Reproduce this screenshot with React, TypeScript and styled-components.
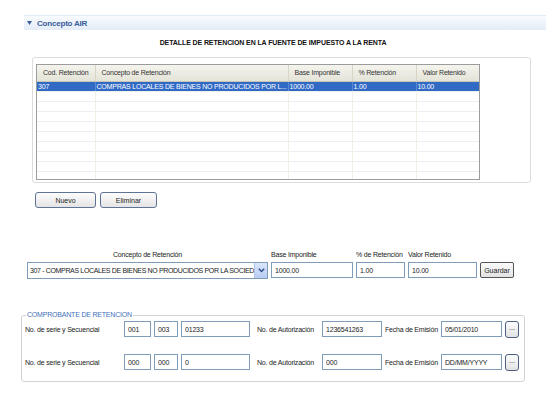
import React from 'react';
import styled, { createGlobalStyle } from 'styled-components';

const GlobalStyle = createGlobalStyle`
  html, body {
    margin: 0;
    padding: 0;
    background: #ffffff;
  }
  body {
    font-family: "Liberation Sans", Arial, sans-serif;
    font-size: 7px;
    color: #222222;
  }
  * {
    box-sizing: border-box;
  }
`;

const Page = styled.div`
  width: 546px;
  height: 403px;
  overflow: hidden;
  padding-top: 15px;
  display: flex;
  flex-direction: column;
  letter-spacing: -0.2px;
`;

const SectionBar = styled.div`
  margin-left: 24px;
  height: 15px;
  display: flex;
  align-items: center;
  gap: 5px;
  padding-left: 3px;
  background: linear-gradient(#f8fbfe, #e4ecf7);
  border-top: 1px solid #e2eaf4;
  font-size: 8px;
  font-weight: bold;
  color: #3b5d9c;
`;

const Title = styled.div`
  margin-top: 8px;
  height: 10px;
  line-height: 10px;
  text-align: center;
  font-weight: bold;
  letter-spacing: -0.1px;
  color: #111111;
`;

const Panel = styled.div`
  margin: 9px 0 0 32px;
  width: 499px;
  height: 126px;
  border: 1px solid #dcdcdc;
  border-radius: 3px;
  padding: 6px 0 0 3px;
`;

const TableBox = styled.div`
  width: 444px;
  height: 116px;
  border: 1px solid #9c9c9c;
  overflow: hidden;
`;

const Grid = styled.table`
  width: 100%;
  table-layout: fixed;
  border-collapse: collapse;
`;

const HeadCell = styled.th`
  height: 16px;
  padding: 0 0 0 6px;
  text-align: left;
  font-weight: normal;
  color: #333333;
  background: linear-gradient(#f4f4ee, #e4e3d8);
  border-right: 1px solid #d6d5c6;
  border-bottom: 1px solid #c6c5b6;
  white-space: nowrap;
  overflow: hidden;
`;

const Row = styled.tr<{ $selected?: boolean }>`
  background: ${(p) => (p.$selected ? '#316ac5' : '#ffffff')};
  color: ${(p) => (p.$selected ? '#ffffff' : '#222222')};
`;

const Cell = styled.td<{ $selected?: boolean }>`
  height: 10px;
  line-height: 9px;
  padding: 0 1px;
  border-right: 1px solid ${(p) => (p.$selected ? '#5a88d4' : '#f1f0e7')};
  border-bottom: 1px solid #efefef;
  white-space: nowrap;
  overflow: hidden;
`;

const ButtonRow = styled.div`
  margin: 9px 0 0 35px;
  display: flex;
  gap: 4px;
`;

const RoundButton = styled.button<{ $width: number }>`
  width: ${(p) => p.$width}px;
  height: 16px;
  padding: 0;
  border: 1px solid #5f7297;
  border-radius: 3px;
  background: linear-gradient(#fdfdfd, #e4e4e4);
  font: inherit;
  color: #222222;
`;

const ConceptGrid = styled.div`
  margin: 41px 0 0 27px;
  display: grid;
  grid-template-columns: 241px 82px 49px 69px 34px;
  grid-template-rows: 10px 16px;
  column-gap: 3px;
  row-gap: 3px;
  align-items: center;
`;

const FieldLabel = styled.div<{ $center?: boolean }>`
  text-align: ${(p) => (p.$center ? 'center' : 'left')};
  white-space: nowrap;
`;

const TextInput = styled.input`
  width: 100%;
  height: 16px;
  margin: 0;
  padding: 0 3px;
  border: 1px solid #7f9db9;
  background: #ffffff;
  font: inherit;
  letter-spacing: -0.2px;
  color: #222222;
  outline: none;
`;

const SelectBox = styled.div`
  height: 17px;
  display: flex;
  align-items: center;
  border: 1px solid #7f9db9;
  background: #ffffff;
  padding-left: 2px;
`;

const SelectText = styled.span`
  flex: 1;
  white-space: nowrap;
  overflow: hidden;
  letter-spacing: -0.35px;
`;

const SelectArrow = styled.span`
  width: 13px;
  height: 15px;
  display: flex;
  align-items: center;
  justify-content: center;
  background: linear-gradient(#dbe6fb, #b8cdf2);
  border-left: 1px solid #b0c4ea;
`;

const SaveButton = styled.button`
  height: 16px;
  padding: 0;
  border: 1px solid #555555;
  border-radius: 2px;
  background: linear-gradient(#fbfbfb, #e2e2e2);
  font: inherit;
  color: #222222;
`;

const Voucher = styled.fieldset`
  margin: 33px 0 0 21px;
  width: 504px;
  min-width: 0;
  border: 1px solid #d2d2d2;
  border-radius: 3px;
  padding: 2px 0 11px 3px;
`;

const VoucherLegend = styled.legend`
  padding: 0 1px;
  margin-left: 1px;
  color: #4470bb;
  line-height: 8px;
`;

const VoucherRows = styled.div`
  display: grid;
  grid-template-columns: 96px 27px 24px 69px 66px 60px 53px 61px 14px;
  grid-auto-rows: 16px;
  column-gap: 3px;
  row-gap: 17px;
  align-items: center;
`;

const RowLabel = styled.div<{ $indent?: number }>`
  padding-left: ${(p) => p.$indent ?? 0}px;
  white-space: nowrap;
`;

const DotsButton = styled.button`
  width: 14px;
  height: 17px;
  padding: 0 0 3px;
  border: 1px solid #4d5f85;
  border-radius: 3px;
  background: linear-gradient(#fdfdfd, #e2e2e2);
  font: inherit;
  color: #222222;
`;

const columns = [
  { title: 'Cod. Retención', width: 58 },
  { title: 'Concepto de Retención', width: 193 },
  { title: 'Base Imponible', width: 64 },
  { title: '% Retención', width: 64 },
  { title: 'Valor Retenido', width: 63 },
];

const detailRows = [
  ['307', 'COMPRAS LOCALES DE BIENES NO PRODUCIDOS POR L...', '1000.00', '1.00', '10.00'],
];

const EMPTY_ROWS = 10;

const vouchers = [
  { serie: '001', punto: '003', secuencial: '01233', autorizacion: '1236541263', fecha: '05/01/2010' },
  { serie: '000', punto: '000', secuencial: '0', autorizacion: '000', fecha: 'DD/MM/YYYY' },
];

const App: React.FC = () => (
  <>
    <GlobalStyle />
    <Page>
      {/* Section header */}
      <SectionBar>
        <svg width="5" height="4" viewBox="0 0 5 4">
          <path d="M0 0 L5 0 L2.5 4 Z" fill="#3b5d9c" />
        </svg>
        Concepto AIR
      </SectionBar>
      <Title>DETALLE DE RETENCION EN LA FUENTE DE IMPUESTO A LA RENTA</Title>

      {/* Detail table */}
      <Panel>
        <TableBox>
          <Grid>
            <colgroup>
              {columns.map((c) => <col key={c.title} style={{ width: c.width }} />)}
            </colgroup>
            <thead>
              <tr>
                {columns.map((c) => <HeadCell key={c.title}>{c.title}</HeadCell>)}
              </tr>
            </thead>
            <tbody>
              {detailRows.map((r) => (
                <Row key={r[0]} $selected>
                  {r.map((v, i) => <Cell key={i} $selected>{v}</Cell>)}
                </Row>
              ))}
              {Array.from({ length: EMPTY_ROWS }).map((_, k) => (
                <Row key={`e${k}`}>
                  {columns.map((c) => <Cell key={c.title} />)}
                </Row>
              ))}
            </tbody>
          </Grid>
        </TableBox>
      </Panel>

      <ButtonRow>
        <RoundButton $width={61}>Nuevo</RoundButton>
        <RoundButton $width={57}>Eliminar</RoundButton>
      </ButtonRow>

      {/* Entry form */}
      <ConceptGrid>
        <FieldLabel $center>Concepto de Retención</FieldLabel>
        <FieldLabel>Base Imponible</FieldLabel>
        <FieldLabel>% de Retención</FieldLabel>
        <FieldLabel>Valor Retenido</FieldLabel>
        <div />
        <SelectBox>
          <SelectText>307 - COMPRAS LOCALES DE BIENES NO PRODUCIDOS POR LA SOCIEDA</SelectText>
          <SelectArrow>
            <svg width="7" height="5" viewBox="0 0 7 5">
              <path d="M0.8 0.8 L3.5 3.6 L6.2 0.8" stroke="#2d4f8e" strokeWidth="1.4" fill="none" />
            </svg>
          </SelectArrow>
        </SelectBox>
        <TextInput readOnly value="1000.00" />
        <TextInput readOnly value="1.00" />
        <TextInput readOnly value="10.00" />
        <SaveButton>Guardar</SaveButton>
      </ConceptGrid>

      {/* Voucher */}
      <Voucher>
        <VoucherLegend>COMPROBANTE DE RETENCION</VoucherLegend>
        <VoucherRows>
          {vouchers.map((v, i) => (
            <React.Fragment key={i}>
              <RowLabel>No. de serie y Secuencial</RowLabel>
              <TextInput readOnly value={v.serie} />
              <TextInput readOnly value={v.punto} />
              <TextInput readOnly value={v.secuencial} />
              <RowLabel $indent={4}>No. de Autorización</RowLabel>
              <TextInput readOnly value={v.autorizacion} />
              <RowLabel>Fecha de Emisión</RowLabel>
              <TextInput readOnly value={v.fecha} />
              <DotsButton>...</DotsButton>
            </React.Fragment>
          ))}
        </VoucherRows>
      </Voucher>
    </Page>
  </>
);

export default App;
